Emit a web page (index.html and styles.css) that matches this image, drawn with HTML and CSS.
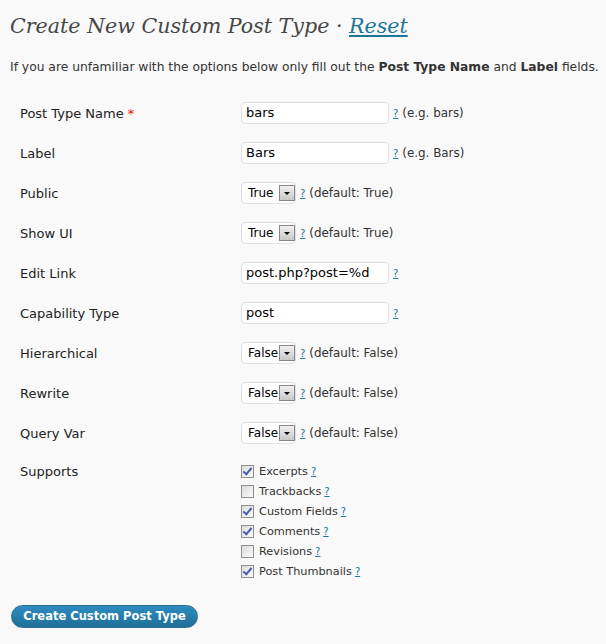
FILE: index.html
```html
<!DOCTYPE html>
<html>
<head>
<meta charset="utf-8">
<link rel="stylesheet" href="styles.css">
</head>
<body>
<div class="wrap">
  <h2 class="title">Create New Custom Post Type · <a href="#" class="reset">Reset</a></h2>
  <p class="intro">If you are unfamiliar with the options below only fill out the <strong>Post Type Name</strong> and <strong>Label</strong> fields.</p>
  <div class="form">
    <div class="row">
      <div class="label">Post Type Name <span class="req">*</span></div>
      <div class="field"><span class="input">bars</span><a class="help" href="#">?</a><span class="hint">(e.g. bars)</span></div>
    </div>
    <div class="row">
      <div class="label">Label</div>
      <div class="field"><span class="input">Bars</span><a class="help" href="#">?</a><span class="hint">(e.g. Bars)</span></div>
    </div>
    <div class="row">
      <div class="label">Public</div>
      <div class="field"><span class="select"><span class="val">True</span><span class="arrow"></span></span><a class="help" href="#">?</a><span class="hint">(default: True)</span></div>
    </div>
    <div class="row">
      <div class="label">Show UI</div>
      <div class="field"><span class="select"><span class="val">True</span><span class="arrow"></span></span><a class="help" href="#">?</a><span class="hint">(default: True)</span></div>
    </div>
    <div class="row">
      <div class="label">Edit Link</div>
      <div class="field"><span class="input">post.php?post=%d</span><a class="help" href="#">?</a></div>
    </div>
    <div class="row">
      <div class="label">Capability Type</div>
      <div class="field"><span class="input">post</span><a class="help" href="#">?</a></div>
    </div>
    <div class="row">
      <div class="label">Hierarchical</div>
      <div class="field"><span class="select"><span class="val">False</span><span class="arrow"></span></span><a class="help" href="#">?</a><span class="hint">(default: False)</span></div>
    </div>
    <div class="row">
      <div class="label">Rewrite</div>
      <div class="field"><span class="select"><span class="val">False</span><span class="arrow"></span></span><a class="help" href="#">?</a><span class="hint">(default: False)</span></div>
    </div>
    <div class="row">
      <div class="label">Query Var</div>
      <div class="field"><span class="select"><span class="val">False</span><span class="arrow"></span></span><a class="help" href="#">?</a><span class="hint">(default: False)</span></div>
    </div>
    <div class="row supports">
      <div class="label">Supports</div>
      <div class="checks">
        <div class="check"><span class="box on"></span>Excerpts <a class="help" href="#">?</a></div>
        <div class="check"><span class="box"></span>Trackbacks <a class="help" href="#">?</a></div>
        <div class="check"><span class="box on"></span>Custom Fields <a class="help" href="#">?</a></div>
        <div class="check"><span class="box on"></span>Comments <a class="help" href="#">?</a></div>
        <div class="check"><span class="box"></span>Revisions <a class="help" href="#">?</a></div>
        <div class="check"><span class="box on"></span>Post Thumbnails <a class="help" href="#">?</a></div>
      </div>
    </div>
  </div>
  <div class="actions"><span class="button">Create Custom Post Type</span></div>
</div>
</body>
</html>
```
FILE: styles.css
```css
html, body {
  margin: 0;
  padding: 0;
  background: #f9f9f9;
}
body {
  font-family: "DejaVu Sans", Verdana, sans-serif;
  color: #333;
  width: 606px;
  height: 644px;
  overflow: hidden;
}
.wrap {
  padding: 0 0 0 10px;
}
.title {
  margin: 0;
  padding: 11px 0 0 0;
  height: 38px;
  font-family: "DejaVu Serif", Georgia, serif;
  font-style: italic;
  font-weight: normal;
  font-size: 20.6px;
  line-height: 30px;
  color: #464646;
}
.reset {
  color: #21759b;
  text-decoration: underline;
}
.intro {
  margin: 10px 0 0 0;
  font-size: 12.3px;
  line-height: 16px;
  color: #333;
  white-space: nowrap;
}
.intro strong { color: #333; }
.form {
  margin-top: 18px;
}
.row {
  display: grid;
  grid-template-columns: 231px 1fr;
  height: 40px;
  align-items: center;
}
.label {
  padding-left: 10px;
  font-size: 13px;
  color: #222;
}
.req { color: #f00; }
.field {
  display: flex;
  align-items: center;
  font-size: 11px;
}
.input {
  box-sizing: border-box;
  width: 148px;
  height: 22px;
  border: 1px solid #dfdfdf;
  border-radius: 4px;
  background: #fff;
  font-size: 13px;
  line-height: 20px;
  padding: 0 4px;
  color: #000;
}
.select {
  box-sizing: border-box;
  display: flex;
  align-items: center;
  width: 55px;
  height: 22px;
  border: 1px solid #dfdfdf;
  border-radius: 4px;
  background: #fff;
  padding: 0 0 0 6px;
  font-size: 12px;
  color: #000;
}
.select .val { width: 31px; }
.arrow {
  box-sizing: border-box;
  width: 16px;
  height: 16px;
  border: 1px solid #888;
  background: linear-gradient(#f0f0f0, #c8c8c8);
  position: relative;
}
.arrow::after {
  content: "";
  position: absolute;
  left: 4px;
  top: 6px;
  border-left: 3px solid transparent;
  border-right: 3px solid transparent;
  border-top: 3px solid #000;
}
.help {
  color: #21759b;
  text-decoration: underline;
  font-size: 10px;
  margin-left: 4px;
  margin-right: 4px;
}
.hint {
  font-size: 11.9px;
  color: #333;
}
.row.supports {
  height: auto;
  align-items: start;
  padding-top: 8px;
}
.supports .label { padding-top: 3px; }
.checks {
  display: flex;
  flex-direction: column;
}
.check {
  display: flex;
  align-items: center;
  height: 20px;
  font-size: 11.3px;
  color: #333;
}
.check .help { margin-left: 3px; }
.box {
  box-sizing: border-box;
  width: 13px;
  height: 13px;
  border: 1px solid #8e8f8f;
  background: linear-gradient(135deg, #dcdcdc, #fbfbfb);
  margin-right: 5px;
  position: relative;
}
.box.on::after {
  content: "";
  position: absolute;
  left: 3px;
  top: 0px;
  width: 3px;
  height: 7px;
  border: solid #4a5fa8;
  border-width: 0 2px 2px 0;
  transform: rotate(40deg);
}
.actions {
  margin-top: 24px;
  padding-left: 1px;
}
.button {
  display: inline-block;
  box-sizing: border-box;
  width: 187px;
  height: 23px;
  border-radius: 12px;
  background: linear-gradient(#2e8cc0, #1f6f97);
  border: 1px solid #2a6f93;
  color: #fff;
  font-weight: bold;
  font-size: 11.5px;
  line-height: 21px;
  text-align: center;
}
```
